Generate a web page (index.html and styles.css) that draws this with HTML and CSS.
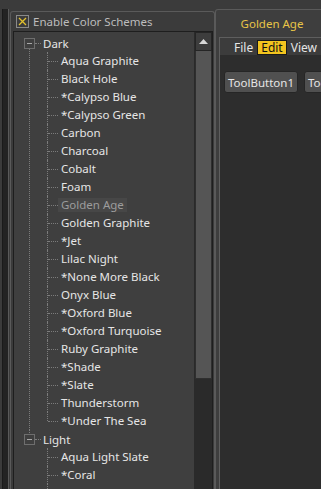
FILE: index.html
```html
<!DOCTYPE html>
<html lang="en">
<head>
    <meta charset="UTF-8">
    <title>Color Schemes</title>
    <link rel="stylesheet" href="styles.css">
</head>
<body>
    <div class="edge"></div>

    <div class="group">
        <label class="group-title">
            <span class="check">
                <svg width="11" height="11" viewBox="0 0 11 11"><path d="M2 2 L9 9 M9 2 L2 9" stroke="#e3c12e" stroke-width="1.3"/></svg>
            </span>
            Enable Color Schemes
        </label>

        <div class="tree-box">
            <ul class="tree">
                <li class="branch">
                    <div class="node"><span class="toggle"></span><span class="label">Dark</span></div>
                    <ul class="children">
                        <li><span class="label">Aqua Graphite</span></li>
                        <li><span class="label">Black Hole</span></li>
                        <li><span class="label">*Calypso Blue</span></li>
                        <li><span class="label">*Calypso Green</span></li>
                        <li><span class="label">Carbon</span></li>
                        <li><span class="label">Charcoal</span></li>
                        <li><span class="label">Cobalt</span></li>
                        <li><span class="label">Foam</span></li>
                        <li class="current"><span class="label">Golden Age</span></li>
                        <li><span class="label">Golden Graphite</span></li>
                        <li><span class="label">*Jet</span></li>
                        <li><span class="label">Lilac Night</span></li>
                        <li><span class="label">*None More Black</span></li>
                        <li><span class="label">Onyx Blue</span></li>
                        <li><span class="label">*Oxford Blue</span></li>
                        <li><span class="label">*Oxford Turquoise</span></li>
                        <li><span class="label">Ruby Graphite</span></li>
                        <li><span class="label">*Shade</span></li>
                        <li><span class="label">*Slate</span></li>
                        <li><span class="label">Thunderstorm</span></li>
                        <li><span class="label">*Under The Sea</span></li>
                    </ul>
                </li>
                <li class="branch">
                    <div class="node"><span class="toggle"></span><span class="label">Light</span></div>
                    <ul class="children">
                        <li><span class="label">Aqua Light Slate</span></li>
                        <li><span class="label">*Coral</span></li>
                        <li><span class="label">Cyan Daylight</span></li>
                    </ul>
                </li>
            </ul>
            <div class="scrollbar">
                <div class="scroll-up">
                    <svg width="9" height="5" viewBox="0 0 9 5"><path d="M0 5 L4.5 0 L9 5 Z" fill="#d8d8d8"/></svg>
                </div>
                <div class="scroll-handle"></div>
                <div class="scroll-track"></div>
            </div>
        </div>
    </div>

    <div class="preview">
        <div class="tab">Golden Age</div>
        <div class="pane">
            <div class="menubar">
                <span class="menu">File</span>
                <span class="menu active">Edit</span>
                <span class="menu">View</span>
            </div>
            <div class="workspace">
                <div class="tool-btn">ToolButton1</div>
                <div class="tool-btn">ToolButton2</div>
            </div>
        </div>
    </div>
</body>
</html>
```

FILE: styles.css
```css
body {
    margin: 0;
    width: 321px;
    height: 489px;
    overflow: hidden;
    background-color: #3b3b3b;
    font-family: "Noto Sans", "Open Sans", sans-serif;
    font-size: 11.5px;
    color: #e6e6e6;
    display: flex;
}
.edge {
    width: 5px;
    flex-shrink: 0;
    margin-top: 9px;
    margin-left: 2px;
    margin-right: 1px;
    background-color: #232323;
    border-left: 1px solid #1a1a1a;
    border-right: 1px solid #5a5a5a;
}
.group {
    width: 203px;
    flex-shrink: 0;
    margin-top: 11px;
    border: 1px solid #5a5a5a;
    border-bottom: none;
    border-radius: 3px 3px 0 0;
    display: flex;
    flex-direction: column;
}
.group-title {
    height: 19px;
    display: flex;
    align-items: center;
    gap: 4px;
    padding-left: 5px;
    color: #bdbdbd;
}
.check {
    width: 11px;
    height: 11px;
    border: 1px solid #8a8a8a;
    display: flex;
}
.tree-box {
    flex: 1;
    margin: 0 1px 0 2px;
    border: 1px solid #1e1e1e;
    border-bottom: none;
    background-color: #3f3f3f;
    display: flex;
    min-height: 0;
}
.tree {
    flex: 1;
    list-style: none;
    margin: 0;
    padding: 2px 0 0 0;
    overflow: hidden;
}
.tree ul {
    list-style: none;
    margin: 0;
    padding: 0;
}
.branch {
    position: relative;
}
.node {
    height: 18px;
    display: flex;
    align-items: center;
    position: relative;
}
.toggle {
    width: 9px;
    height: 9px;
    margin-left: 10px;
    border: 1px solid #6e6e6e;
    position: relative;
}
.toggle::after {
    content: "";
    position: absolute;
    left: 2px;
    top: 4px;
    width: 5px;
    border-top: 1px solid #a8a8a8;
}
.node::after {
    content: "";
    position: absolute;
    left: 21px;
    top: 9px;
    width: 6px;
    border-top: 1px dotted #7c7c7c;
}
.node .label {
    margin-left: 8px;
}
.branch:first-child::before {
    content: "";
    position: absolute;
    left: 15px;
    top: 14px;
    bottom: 0;
    border-left: 1px dotted #7c7c7c;
}
.branch:last-child::before {
    content: "";
    position: absolute;
    left: 15px;
    top: 0;
    height: 3px;
    border-left: 1px dotted #7c7c7c;
}
.children li {
    height: 18px;
    display: flex;
    align-items: center;
    padding-left: 44px;
    position: relative;
    white-space: nowrap;
}
.children li::before {
    content: "";
    position: absolute;
    left: 33px;
    top: 0;
    bottom: 0;
    border-left: 1px dotted #7c7c7c;
}
.children li:last-child::before {
    bottom: 9px;
}
.children li::after {
    content: "";
    position: absolute;
    left: 34px;
    top: 9px;
    width: 10px;
    border-top: 1px dotted #7c7c7c;
}
.children .label {
    padding: 0 3px;
    line-height: 14px;
}
.current .label {
    color: #9c9c9c;
    background-color: #474747;
}
.scrollbar {
    width: 17px;
    flex-shrink: 0;
    display: flex;
    flex-direction: column;
    border-left: 1px solid #2a2a2a;
}
.scroll-up {
    height: 17px;
    background-color: #3d3d3d;
    border: 1px solid #252525;
    display: flex;
    align-items: center;
    justify-content: center;
}
.scroll-handle {
    height: 327px;
    background-color: #555555;
    border: 1px solid #2f2f2f;
    border-top: none;
}
.scroll-track {
    flex: 1;
    background-color: #2a2a2a;
}
.preview {
    flex: 1;
    display: flex;
    flex-direction: column;
    min-width: 0;
}
.tab {
    margin-top: 9px;
    margin-right: -8px;
    height: 27px;
    border: 1px solid #5a5a5a;
    border-bottom: none;
    border-radius: 3px 3px 0 0;
    background-color: #3e3e3e;
    color: #e8c547;
    font-size: 11.5px;
    display: flex;
    align-items: center;
    justify-content: center;
}
.pane {
    flex: 1;
    border-left: 1px solid #5a5a5a;
    padding-left: 3px;
    background-color: #3e3e3e;
    display: flex;
    flex-direction: column;
}
.menubar {
    height: 17px;
    border-top: 1px solid #5e5e5e;
    border-left: 1px solid #5e5e5e;
    background-color: #3c3c3c;
    display: flex;
    align-items: flex-end;
    padding-left: 10px;
    white-space: nowrap;
    font-size: 12px;
}
.menu {
    padding: 0 3px;
    line-height: 13px;
    border: 1px solid transparent;
}
.menu.active {
    background-color: #f2c41f;
    color: #111;
    border-color: #1a1a1a;
}
.workspace {
    flex: 1;
    background-color: #2d2d2d;
    border-left: 1px solid #5e5e5e;
    display: flex;
    align-items: flex-start;
    gap: 6px;
    padding: 16px 0 0 4px;
    white-space: nowrap;
}
.tool-btn {
    height: 20px;
    padding: 0 3px;
    border: 1px solid #262626;
    border-radius: 3px;
    background-color: #505050;
    display: flex;
    align-items: center;
    flex-shrink: 0;
}
```
